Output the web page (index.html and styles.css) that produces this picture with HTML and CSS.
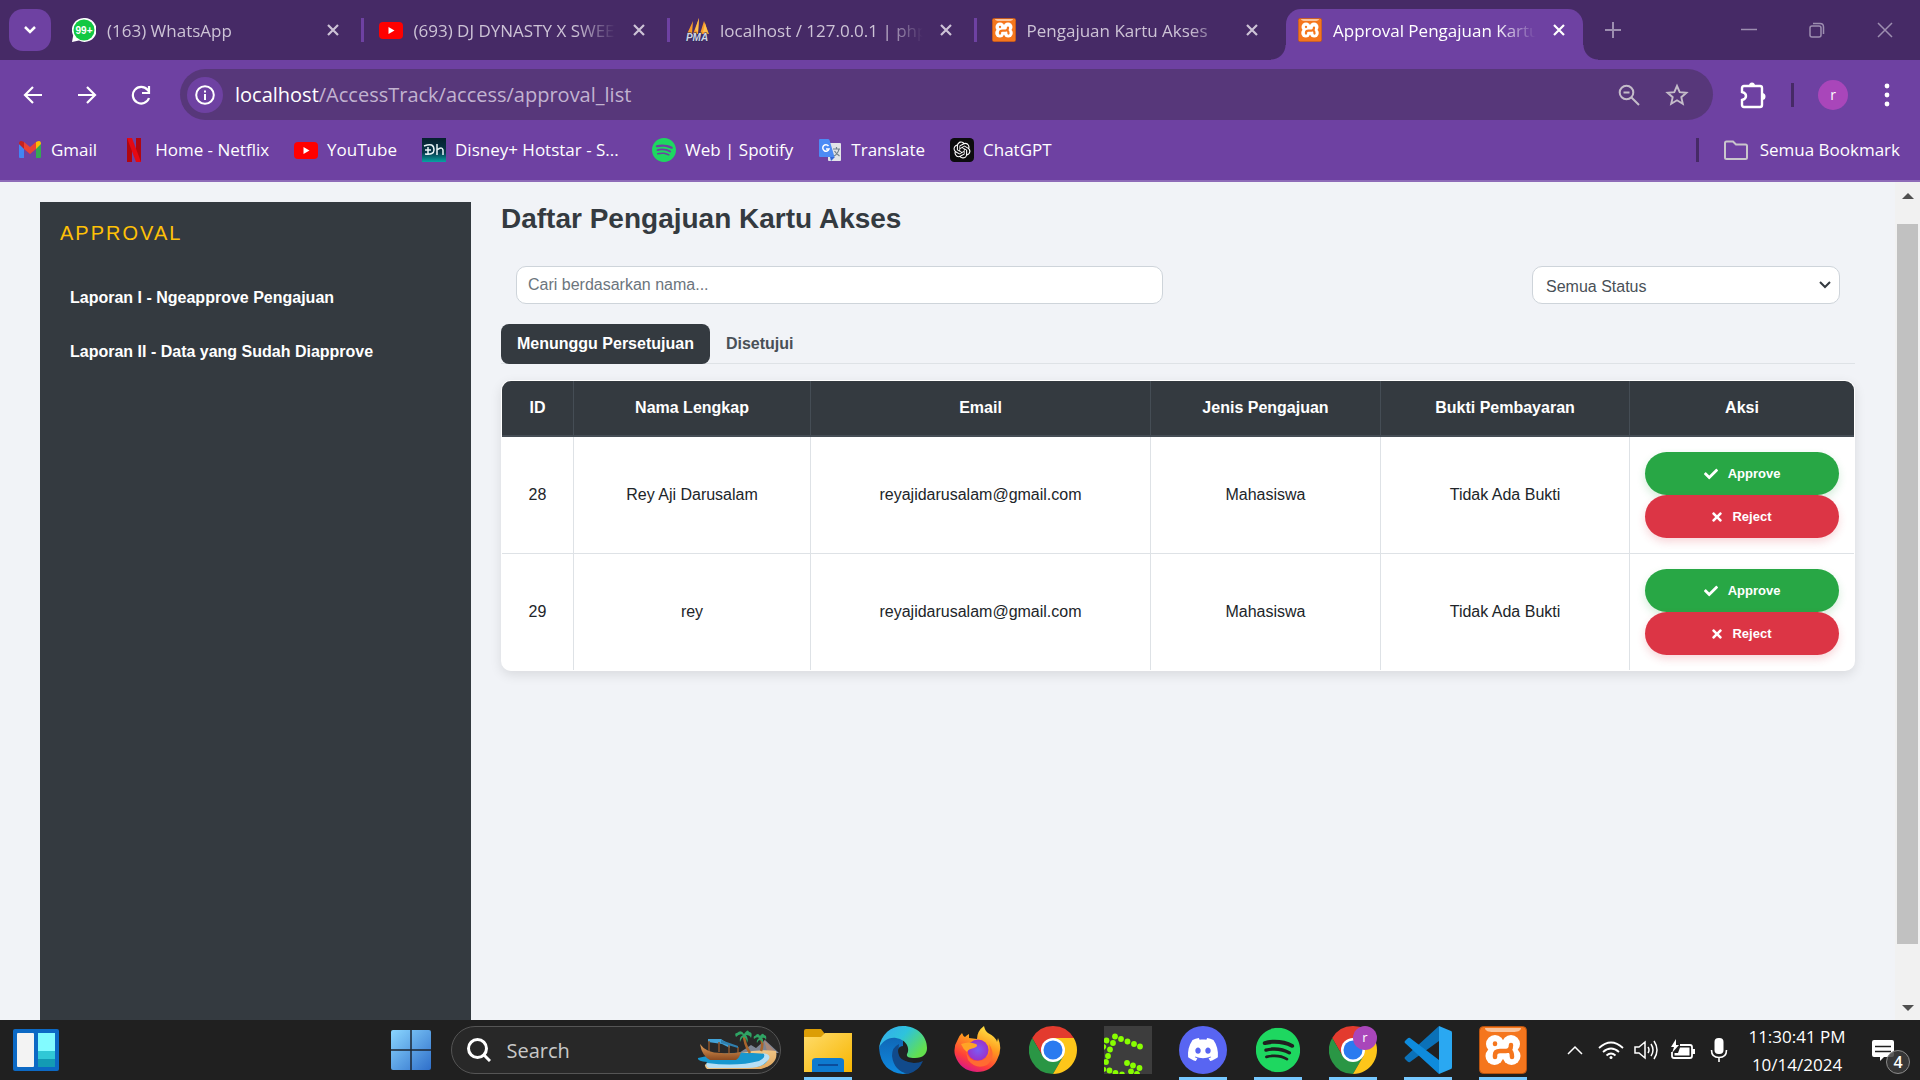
FILE: index.html
```html
<!DOCTYPE html>
<html lang="id">
<head>
<meta charset="utf-8">
<meta name="viewport" content="width=device-width, initial-scale=1">
<title>Approval Pengajuan Kartu Akses</title>
<link rel="stylesheet" href="styles.css">
</head>
<body>
<svg class="sprite" width="0" height="0" aria-hidden="true">
  <defs>
    <linearGradient id="g-edge" x1="0" y1="0" x2="1" y2="0.6"><stop offset="0" stop-color="#35a8f0"/><stop offset=".5" stop-color="#2ec3dc"/><stop offset="1" stop-color="#63e04e"/></linearGradient>
    <linearGradient id="g-edge2" x1="0" y1="0" x2="0" y2="1"><stop offset="0" stop-color="#1066b5"/><stop offset="1" stop-color="#0f8ae0"/></linearGradient>
    <linearGradient id="g-fox" x1="0.8" y1="0" x2="0.3" y2="1"><stop offset="0" stop-color="#fff04a"/><stop offset=".4" stop-color="#ff9a1f"/><stop offset=".75" stop-color="#ff4038"/><stop offset="1" stop-color="#d9148c"/></linearGradient>
    <radialGradient id="g-globe"><stop offset="0" stop-color="#7b5cf5"/><stop offset="1" stop-color="#9a32c9"/></radialGradient>
    <linearGradient id="g-folder" x1="0" y1="0" x2="1" y2="1"><stop offset="0" stop-color="#ffdc6b"/><stop offset="1" stop-color="#f7b500"/></linearGradient>
    <linearGradient id="g-win" x1="0" y1="0" x2="1" y2="1"><stop offset="0" stop-color="#8ad6ff"/><stop offset="1" stop-color="#2f6fca"/></linearGradient>
    <linearGradient id="g-disney" x1="0" y1="0" x2="0" y2="1"><stop offset="0" stop-color="#06202e"/><stop offset=".6" stop-color="#07384a"/><stop offset="1" stop-color="#08a3a3"/></linearGradient>
    <linearGradient id="g-sand" x1="0" y1="0" x2="1" y2="1"><stop offset="0" stop-color="#fbe0a8"/><stop offset="1" stop-color="#e0a55c"/></linearGradient>
    <linearGradient id="g-hull" x1="0" y1="0" x2="0" y2="1"><stop offset="0" stop-color="#e2a05a"/><stop offset="1" stop-color="#8a4a20"/></linearGradient>
  </defs>
  <symbol id="i-close" viewBox="0 0 14 14"><path d="M2 2l10 10M12 2L2 12" fill="none" stroke="currentColor" stroke-width="2.2"/></symbol>
  <symbol id="i-youtube" viewBox="0 0 24 24"><rect y="4" width="24" height="17" rx="4" fill="#f00"/><path d="M9.500 9v7l6-3.500z" fill="#fff"/></symbol>
  <symbol id="i-xampp" viewBox="0 0 48 48">
    <rect x=".5" y=".5" width="47" height="47" rx="4" fill="#f5761d" stroke="#b9530f"/>
    <path d="M6 2h36c0 3-4 4-8 4H14C10 6 6 5 6 2z" fill="#fbc49b"/>
    <g fill="#fff"><circle cx="16" cy="18" r="9"/><circle cx="32" cy="18" r="9"/><circle cx="15.500" cy="30" r="9"/><circle cx="32.500" cy="30" r="9"/><rect x="14" y="17" width="20" height="15"/></g>
    <g fill="none" stroke="#f5761d" stroke-width="4.500" stroke-linecap="round"><path d="M16 17.500v.6M16 31v-2q0-4 5-4h6q5 0 5-6M31 25q2 1 2 6"/></g>
  </symbol>
  <symbol id="i-spotify" viewBox="0 0 24 24"><path fill="#1ed760" d="M12 0C5.400 0 0 5.400 0 12s5.400 12 12 12 12-5.400 12-12S18.660 0 12 0zm5.521 17.340c-.24.359-.66.48-1.021.24-2.820-1.740-6.360-2.101-10.561-1.141-.418.122-.779-.179-.899-.539-.12-.421.18-.78.54-.9 4.560-1.021 8.520-.6 11.640 1.320.42.18.479.659.301 1.020zm1.440-3.300c-.301.42-.841.6-1.262.3-3.239-1.980-8.159-2.580-11.939-1.380-.479.12-1.020-.12-1.140-.6-.12-.48.12-1.021.6-1.141C9.600 9.900 15 10.561 18.720 12.840c.361.181.54.78.241 1.200zm.12-3.360C15.240 8.400 8.820 8.160 5.160 9.301c-.6.179-1.200-.181-1.380-.721-.18-.601.18-1.200.72-1.381 4.260-1.260 11.280-1.020 15.721 1.621.539.3.719 1.020.419 1.560-.299.421-1.020.599-1.559.3z"/></symbol>
  <symbol id="i-chrome" viewBox="0 0 48 48"><path d="M24 12h20.780A24 24 0 0 0 3.210 12l10.400 18z" fill="#e33b2e"/><path d="M13.610 30L3.210 12A24 24 0 0 0 24 48l10.390-18z" fill="#2a9645"/><path d="M34.390 30L24 48A24 24 0 0 0 44.780 12H24z" fill="#fdc61a"/><circle cx="24" cy="24" r="12" fill="#fff"/><circle cx="24" cy="24" r="9.500" fill="#2a7af0"/></symbol>
  <symbol id="i-check" viewBox="0 0 512 512"><path fill="currentColor" d="M173.898 439.404l-166.400-166.400c-9.997-9.997-9.997-26.206 0-36.204l36.203-36.204c9.997-9.998 26.207-9.998 36.204 0L192 312.690 432.095 72.596c9.997-9.997 26.207-9.997 36.204 0l36.203 36.204c9.997 9.997 9.997 26.206 0 36.204l-294.400 294.401c-9.998 9.997-26.207 9.997-36.204-.001z"/></symbol>
  <symbol id="i-times" viewBox="0 0 352 512"><path fill="currentColor" d="M242.720 256l100.070-100.070c12.280-12.280 12.280-32.190 0-44.480l-22.240-22.240c-12.280-12.280-32.190-12.280-44.480 0L176 189.280 75.930 89.210c-12.280-12.280-32.190-12.280-44.480 0L9.210 111.450c-12.280 12.280-12.280 32.190 0 44.480L109.280 256 9.210 356.070c-12.280 12.280-12.280 32.190 0 44.480l22.240 22.240c12.280 12.280 32.200 12.280 44.480 0L176 322.720l100.070 100.070c12.280 12.280 32.200 12.280 44.480 0l22.240-22.240c12.280-12.280 12.280-32.190 0-44.480L242.720 256z"/></symbol>
</svg>

<header class="browser">
  <div class="tabstrip">
    <button class="tab-search" aria-label="Telusuri tab"><svg width="14" height="10" viewBox="0 0 14 10"><path d="M2 2l5 5 5-5" fill="none" stroke="#fff" stroke-width="2.500"/></svg></button>
    <nav class="tabs" aria-label="Tab">
      <div class="tab">
        <svg class="favicon" viewBox="0 0 24 24"><path d="M12 0a12 12 0 1 1-5 22.600L0 24l1.200-6.500A12 12 0 0 1 12 0z" fill="#fff"/><circle cx="12" cy="12" r="10.500" fill="#12c843"/><text x="12" y="16" text-anchor="middle" class="badge-text">99+</text></svg>
        <a class="tab-title" href="#whatsapp">(163) WhatsApp</a>
        <button class="tab-close" aria-label="Tutup"><svg><use href="#i-close"/></svg></button>
      </div>
      <div class="tab">
        <svg class="favicon"><use href="#i-youtube"/></svg>
        <a class="tab-title" href="#youtube">(693) DJ DYNASTY X SWEET</a>
        <button class="tab-close" aria-label="Tutup"><svg><use href="#i-close"/></svg></button>
      </div>
      <div class="tab">
        <svg class="favicon" viewBox="0 0 24 24"><path d="M2 16L8 3l-1 13zM8 16l6-16-1 16zM15 16L19 3l5 13z" fill="#f79a2a"/><path d="M10 12L14 0l-1 14zM18 14l2-9 3 10z" fill="#ffc04d"/><text x="12" y="23" text-anchor="middle" class="pma-text">PMA</text></svg>
        <a class="tab-title" href="#phpmyadmin">localhost / 127.0.0.1 | phpMyAdmin</a>
        <button class="tab-close" aria-label="Tutup"><svg><use href="#i-close"/></svg></button>
      </div>
      <div class="tab tab-last">
        <svg class="favicon"><use href="#i-xampp"/></svg>
        <a class="tab-title" href="#pengajuan">Pengajuan Kartu Akses</a>
        <button class="tab-close" aria-label="Tutup"><svg><use href="#i-close"/></svg></button>
      </div>
      <div class="tab tab-active">
        <svg class="favicon"><use href="#i-xampp"/></svg>
        <a class="tab-title" href="#approval" aria-current="page">Approval Pengajuan Kartu Akses</a>
        <button class="tab-close" aria-label="Tutup"><svg><use href="#i-close"/></svg></button>
      </div>
    </nav>
    <button class="new-tab" aria-label="Tab baru"><svg width="16" height="16" viewBox="0 0 16 16"><path d="M8 0v16M0 8h16" stroke="currentColor" stroke-width="2"/></svg></button>
    <div class="window-controls">
      <button aria-label="Minimalkan"><svg width="16" height="16" viewBox="0 0 16 16"><path d="M0 7.500h16" stroke="currentColor" stroke-width="1.500"/></svg></button>
      <button aria-label="Pulihkan"><svg width="16" height="16" viewBox="0 0 16 16" fill="none" stroke="currentColor" stroke-width="1.500"><rect x="1" y="4" width="11" height="11" rx="2"/><path d="M4 1.500h7q3.500 0 3.500 3.500v7"/></svg></button>
      <button aria-label="Tutup jendela"><svg width="16" height="16" viewBox="0 0 16 16"><path d="M1 1l14 14M15 1L1 15" stroke="currentColor" stroke-width="1.500"/></svg></button>
    </div>
  </div>

  <div class="toolbar">
    <div class="nav-buttons">
      <button class="icon-button" aria-label="Kembali"><svg width="20" height="20" viewBox="0 0 20 20"><path d="M19 10H2M10 2l-8 8 8 8" fill="none" stroke="currentColor" stroke-width="2.200"/></svg></button>
      <button class="icon-button" aria-label="Maju"><svg width="20" height="20" viewBox="0 0 20 20"><path d="M1 10h17M10 2l8 8-8 8" fill="none" stroke="currentColor" stroke-width="2.200"/></svg></button>
      <button class="icon-button" aria-label="Muat ulang"><svg width="20" height="20" viewBox="0 0 20 20"><path d="M18 13a8.300 8.300 0 1 1-1.500-8.200L18 6.500M18 1v7h-7" fill="none" stroke="currentColor" stroke-width="2.200"/></svg></button>
    </div>
    <div class="omnibox">
      <button class="site-info" aria-label="Informasi situs"><svg width="20" height="20" viewBox="0 0 20 20"><circle cx="10" cy="10" r="8.800" fill="none" stroke="#fff" stroke-width="2"/><path d="M10 9v6M10 5.500v2" stroke="#fff" stroke-width="2"/></svg></button>
      <div class="url" role="textbox" aria-label="Alamat" contenteditable="true" spellcheck="false"><b>localhost</b>/AccessTrack/access/approval_list</div>
      <button class="icon-button dim" aria-label="Zoom"><svg width="22" height="22" viewBox="0 0 22 22" fill="none" stroke="currentColor" stroke-width="2"><circle cx="8.500" cy="8.500" r="6.800"/><path d="M13.500 13.500l7.500 7.500M5.500 8.500h6"/></svg></button>
      <button class="icon-button dim" aria-label="Bookmark tab ini"><svg width="24" height="24" viewBox="0 0 24 24"><path d="M12 3l2.700 6.200 6.700.6-5.100 4.400 1.500 6.600-5.800-3.500-5.800 3.500 1.500-6.600-5.100-4.400 6.700-.6z" fill="none" stroke="currentColor" stroke-width="1.900"/></svg></button>
    </div>
    <button class="icon-button puzzle" aria-label="Ekstensi"><svg width="26" height="28" viewBox="0 0 26 28"><path d="M2 7q0-2 2-2h16q2 0 2 2v17q0 2-2 2H4q-2 0-2-2v-5q4-1 4-4t-4-4z" fill="none" stroke="#fff" stroke-width="2.400"/><path d="M9 5a3 3.500 0 0 1 6 0zM22 12a3.500 3.500 0 0 1 0 7z" fill="#fff"/></svg></button>
    <span class="divider"></span>
    <button class="avatar" aria-label="Profil">r</button>
    <button class="icon-button" aria-label="Menu"><svg width="6" height="24" viewBox="0 0 6 24" fill="#fff"><circle cx="3" cy="3" r="2.400"/><circle cx="3" cy="12" r="2.400"/><circle cx="3" cy="21" r="2.400"/></svg></button>
  </div>

  <nav class="bookmarks" aria-label="Bookmark">
    <a href="#gmail"><svg viewBox="0 0 24 24"><path d="M1 20V6l5 4v10H2q-1 0-1-1z" fill="#4285f4"/><path d="M18 10l5-4v13q0 1-1 1h-4z" fill="#34a853"/><path d="M6 4l6 5 6-5v7l-6 5-6-5z" fill="#ea4335"/><path d="M18 4q5-3 5 2l-5 5z" fill="#fbbc04"/><path d="M6 4Q1 1 1 6l5 5z" fill="#c5221f"/></svg>Gmail</a>
    <a href="#netflix"><svg viewBox="0 0 24 24"><path d="M5 0h5v24H5zM14 0h5v24h-5z" fill="#b1060f"/><path d="M5 0h5l9 24h-5z" fill="#e50914"/></svg>Home - Netflix</a>
    <a href="#youtube"><svg><use href="#i-youtube"/></svg>YouTube</a>
    <a class="truncated" href="#hotstar"><svg viewBox="0 0 24 24"><rect width="24" height="24" fill="url(#g-disney)"/><path d="M2 8q10-4 10 4 0 5-9 4M6 9v8M3 12h6M15 6v11M15 12q5-4 6 0v5" fill="none" stroke="#e8f4f6" stroke-width="1.500"/></svg>Disney+ Hotstar - S...</a>
    <a href="#spotify"><svg><use href="#i-spotify"/></svg>Web | Spotify</a>
    <a href="#translate"><svg viewBox="0 0 24 24"><rect x="10" y="5" width="13" height="18" rx="1" fill="#e2e4e8"/><path d="M2 1h8q1 0 1.500 1l5 17H2q-1 0-1-1V2q0-1 1-1z" fill="#4c8bf5"/><path d="M12 19h5l-4 4z" fill="#3367d6"/><path d="M10.500 8a3.200 3.200 0 1 0 .5 3H8" fill="none" stroke="#fff" stroke-width="1.500"/><path d="M15 11h7M18.500 9v2M21 11q-1 5-5 7M16.500 13q2 3 5 5" fill="none" stroke="#70808c" stroke-width="1.200"/></svg>Translate</a>
    <a href="#chatgpt"><svg viewBox="0 0 34 34"><rect width="34" height="34" rx="6" fill="#0c0c0e"/><path transform="translate(5 5)" fill="#fff" d="M22.282 9.821a5.985 5.985 0 0 0-.516-4.911 6.046 6.046 0 0 0-6.510-2.900A6.065 6.065 0 0 0 4.981 4.182a5.985 5.985 0 0 0-3.998 2.900 6.046 6.046 0 0 0 .743 7.097 5.980 5.980 0 0 0 .511 4.911 6.051 6.051 0 0 0 6.515 2.900A5.985 5.985 0 0 0 13.260 24a6.056 6.056 0 0 0 5.772-4.206 5.989 5.989 0 0 0 3.998-2.900 6.056 6.056 0 0 0-.748-7.073zm-9.022 12.608a4.476 4.476 0 0 1-2.876-1.041l.142-.080 4.778-2.758a.795.795 0 0 0 .393-.681v-6.737l2.020 1.169a.071.071 0 0 1 .038.052v5.583a4.504 4.504 0 0 1-4.495 4.494zm-9.661-4.125a4.471 4.471 0 0 1-.535-3.014l.142.085 4.783 2.758a.771.771 0 0 0 .781 0l5.843-3.369v2.332a.080.080 0 0 1-.033.062L9.740 19.950a4.499 4.499 0 0 1-6.141-1.646zM2.341 7.896a4.485 4.485 0 0 1 2.366-1.973V11.600a.766.766 0 0 0 .388.677l5.814 3.354-2.020 1.169a.076.076 0 0 1-.071 0l-4.830-2.787A4.504 4.504 0 0 1 2.341 7.872zm16.596 3.856L13.104 8.364 15.119 7.200a.076.076 0 0 1 .071 0l4.830 2.791a4.494 4.494 0 0 1-.677 8.104v-5.677a.790.790 0 0 0-.407-.667zm2.011-3.023l-.142-.085-4.774-2.782a.776.776 0 0 0-.785 0L9.409 9.230V6.897a.066.066 0 0 1 .028-.062l4.830-2.787a4.499 4.499 0 0 1 6.680 4.660zM8.307 12.863l-2.020-1.164a.080.080 0 0 1-.038-.057V6.074a4.499 4.499 0 0 1 7.376-3.454l-.142.081L8.704 5.459a.795.795 0 0 0-.393.681zm1.098-2.365l2.602-1.500 2.607 1.500v2.999l-2.597 1.500-2.607-1.500Z"/></svg>ChatGPT</a>
    <span class="spacer"></span>
    <span class="divider"></span>
    <a class="all-bookmarks" href="#semua"><svg viewBox="0 0 24 24"><path d="M1 5q0-1.500 1.500-1.500H9l3 3h9.500Q23 6.500 23 8v11.500q0 1.500-1.500 1.500h-19Q1 21 1 19.500z" fill="none" stroke="#c9c6cc" stroke-width="2"/></svg>Semua Bookmark</a>
  </nav>
</header>

<div class="viewport">
  <div class="page">
    <aside class="sidebar">
      <h4 class="sidebar-title">APPROVAL</h4>
      <nav class="sidebar-nav">
        <a href="#laporan-1">Laporan I - Ngeapprove Pengajuan</a>
        <a href="#laporan-2">Laporan II - Data yang Sudah Diapprove</a>
      </nav>
    </aside>
    <main class="content">
      <h2 class="heading">Daftar Pengajuan Kartu Akses</h2>
      <form class="filters">
        <input class="field search-name" type="text" placeholder="Cari berdasarkan nama..." aria-label="Cari berdasarkan nama">
        <div class="status">
          <select class="field" aria-label="Status"><option>Semua Status</option><option>Menunggu</option><option>Disetujui</option></select>
          <svg width="14" height="10" viewBox="0 0 14 10"><path d="M2 2l5 5 5-5" fill="none" stroke="#343a40" stroke-width="2"/></svg>
        </div>
      </form>
      <div class="pills" role="tablist">
        <button class="pill pill-active" role="tab" aria-selected="true">Menunggu Persetujuan</button>
        <button class="pill" role="tab" aria-selected="false">Disetujui</button>
      </div>
      <div class="table-card">
        <table>
          <colgroup><col class="c-id"><col class="c-name"><col class="c-email"><col class="c-type"><col class="c-proof"><col class="c-action"></colgroup>
          <thead><tr><th>ID</th><th>Nama Lengkap</th><th>Email</th><th>Jenis Pengajuan</th><th>Bukti Pembayaran</th><th>Aksi</th></tr></thead>
          <tbody>
            <tr><td>28</td><td>Rey Aji Darusalam</td><td>reyajidarusalam@gmail.com</td><td>Mahasiswa</td><td>Tidak Ada Bukti</td>
              <td class="actions"><button class="action approve"><svg width="14" height="14"><use href="#i-check"/></svg>Approve</button><button class="action reject"><svg width="10" height="14"><use href="#i-times"/></svg>Reject</button></td></tr>
            <tr><td>29</td><td>rey</td><td>reyajidarusalam@gmail.com</td><td>Mahasiswa</td><td>Tidak Ada Bukti</td>
              <td class="actions"><button class="action approve"><svg width="14" height="14"><use href="#i-check"/></svg>Approve</button><button class="action reject"><svg width="10" height="14"><use href="#i-times"/></svg>Reject</button></td></tr>
          </tbody>
        </table>
      </div>
    </main>
  </div>
  <div class="scrollbar" aria-hidden="true">
    <svg width="12" height="8" viewBox="0 0 12 8"><path d="M0 7l6-6 6 6z" fill="#505050"/></svg>
    <div class="thumb"></div>
    <svg class="down" width="12" height="8" viewBox="0 0 12 8"><path d="M0 1l6 6 6-6z" fill="#505050"/></svg>
  </div>
</div>

<footer class="taskbar">
  <button class="widgets" aria-label="Widget"><svg width="46" height="42" viewBox="0 0 46 42"><rect width="46" height="42" rx="2" fill="#0c69c4"/><rect x="4" y="4" width="17" height="34" rx="1" fill="#f3f3f3"/><rect x="25" y="4" width="17" height="18" fill="#82fbff"/><path d="M25 22h17v8H25z" fill="#30c8d6"/><path d="M25 30h17v8H25z" fill="#139bb4"/></svg></button>
  <div class="task-center">
    <button class="start" aria-label="Start"><svg width="40" height="40" viewBox="0 0 40 40"><rect width="40" height="40" rx="2" fill="url(#g-win)"/><path d="M20 0v40M0 20h40" stroke="#1c2530" stroke-width="1.500"/></svg></button>
    <div class="task-search">
      <svg width="24" height="24" viewBox="0 0 24 24" fill="none" stroke="#fff" stroke-width="3"><circle cx="10.500" cy="10.500" r="9"/><path d="M17 17l6 6"/></svg>
      <input type="search" placeholder="Search" aria-label="Search">
      <svg width="82" height="42" viewBox="0 0 82 42">
        <path d="M42 24l12-8 5 3 9-8 14 13z" fill="#7d8594"/><path d="M67 11l12 12-9-1z" fill="#a88878"/>
        <path d="M44 24q18-4 35-2 3 13-15 18H10q-4-4 0-6z" fill="url(#g-sand)"/>
        <path d="M1 29q30-8 68-4 6 9-9 13H12q-4-2-2-5Q0 32 1 29z" fill="#1797cf"/><path d="M10 34q30 4 52-2 8-4 4-8 12 2 2 10-5 5-18 5H12q-4-2-2-5z" fill="#b7dff5"/>
        <path d="M53 24Q47 15 47 5M64 22q3-8-1-15" fill="none" stroke="#a8662c" stroke-width="2.500"/>
        <path d="M47 5q-3-5-7-1-3 0-1 4 4-4 7-2-4 2-3 7 2-5 4-5 3 2 3 6 2-4-1-8 4 0 5 3 2-6-2-6-1-4-5 2zM63 7q-2-4-5 0-2 0-1 3 3-3 5-1-3 2-2 5 1-3 3-3 3 1 2 4 2-4 0-6 3-1 4 2 1-5-2-5-1-3-4 1z" fill="#2fa464"/>
        <path d="M11 10h13l9 6v3l-8-4-14-2z" fill="#42a3d8"/><path d="M12 12v11M22 13v10M32 16v10M41 18v8" stroke="#8c542b" stroke-width="1.500"/><path d="M24 11l17 6v2l-17-5z" fill="#2f7fae"/>
        <path d="M3 15q6 9 21 9 11 1 20-1-1 5-5 8H13Q5 27 3 15z" fill="url(#g-hull)"/>
      </svg>
    </div>
    <div class="apps">
      <button class="open" aria-label="File Explorer"><svg viewBox="0 0 48 48"><path d="M0 5q0-2 2-2h15l4 5v6H0z" fill="#dc9e06"/><path d="M0 11h17l4-4h27v39H0z" fill="url(#g-folder)"/><path d="M8 46V35q0-3 4-3h24q4 0 4 3v11z" fill="#0e7bd0"/><path d="M14 39h20" stroke="#0b4d9b" stroke-width="2"/></svg></button>
      <button aria-label="Edge"><svg viewBox="0 0 48 48"><path d="M0 22C3 10 16 8 24 14L24 30Q26 42 40 41 32 48 24 48 2 46 0 22z" fill="url(#g-edge2)"/><path d="M13 30q0-9 7-12-1 5 0 9 3 9 15 10 5 0 9-2-4 10-15 13Q15 45 13 30z" fill="#114a8b"/><path d="M0 22C2 8 12 0 24 0c14 0 24 10 24 22 0 6-4 10-12 10-6 0-9-1-8-4 3-4 1-14-11-16C9 11 3 16 0 22z" fill="url(#g-edge)"/><path d="M19 25a5 5 0 0 1 9-3q1 4-1 6.500Q28 33 38 35q-18 3-19-10z" fill="#202225"/></svg></button>
      <button aria-label="Firefox"><svg viewBox="0 0 48 48"><path d="M4 13q1-3 4-6 1 3 3 4 2-2 4-3v4l8 1q0-8 7-13 1 5 4 7 8 4 9 9l1-4q5 11-1 22-6 12-20 12Q6 45 1 29-1 21 4 13z" fill="url(#g-fox)"/><circle cx="24" cy="24" r="10.500" fill="url(#g-globe)"/><path d="M7 18q8-3 15 0 3 2-2 4-6 1-7 4-4-3-6-8z" fill="#ffa426"/><path d="M12 26q5 12 17 8 9-4 6-16 8 12-2 21-11 5-19-5z" fill="#ff6b31"/></svg></button>
      <button aria-label="Chrome"><svg><use href="#i-chrome"/></svg></button>
      <button aria-label="Editor"><svg viewBox="0 0 48 48"><rect width="48" height="48" fill="#3d3d3d"/><g fill="#8f0"><circle cx="36" cy="20.500" r="2.900"/><circle cx="30" cy="18" r="2.900"/><circle cx="23.500" cy="15.500" r="2.900"/><circle cx="17" cy="13" r="2.900"/><circle cx="11" cy="10.500" r="2.900"/><circle cx="9" cy="17" r="2.900"/><circle cx="6" cy="23.500" r="2.900"/><circle cx="4" cy="30" r="2.900"/><circle cx="2" cy="36" r="2.900"/><circle cx="2.500" cy="14.500" r="2.900"/><path d="M0 18q3 1 2 4l-2 2zM0 41q3 0 2 4l-2 1z"/><circle cx="5.500" cy="44.500" r="2.900"/><circle cx="11.500" cy="47" r="2.900"/><circle cx="18" cy="48.500" r="2.900"/><circle cx="23" cy="37" r="2.900"/><circle cx="29" cy="39.500" r="2.900"/><circle cx="35.500" cy="42" r="2.900"/><circle cx="27" cy="45.500" r="2.900"/><circle cx="33" cy="48" r="2.900"/></g></svg></button>
      <button class="open" aria-label="Discord"><svg viewBox="0 0 48 48"><circle cx="24" cy="24" r="24" fill="#5865f2"/><path transform="translate(9 8.500) scale(1.250)" fill="#fff" d="M20.317 4.370a19.791 19.791 0 0 0-4.885-1.515.074.074 0 0 0-.079.037c-.211.375-.445.865-.608 1.250-1.845-.276-3.680-.276-5.487 0-.164-.393-.406-.874-.618-1.250a.077.077 0 0 0-.079-.037 19.736 19.736 0 0 0-4.885 1.515.070.070 0 0 0-.032.028C.533 9.046-.319 13.580.099 18.058a.082.082 0 0 0 .031.056c2.053 1.508 4.041 2.423 5.993 3.029a.078.078 0 0 0 .084-.028c.462-.630.873-1.295 1.226-1.994a.076.076 0 0 0-.042-.106c-.653-.248-1.274-.550-1.872-.892a.077.077 0 0 1-.008-.128c.126-.094.252-.192.372-.291a.074.074 0 0 1 .078-.011c3.928 1.793 8.180 1.793 12.061 0a.074.074 0 0 1 .079.010c.120.099.246.198.373.292a.077.077 0 0 1-.007.128 12.299 12.299 0 0 1-1.873.891.077.077 0 0 0-.041.107c.360.698.772 1.363 1.225 1.993a.076.076 0 0 0 .084.029c1.961-.607 3.950-1.522 6.002-3.029a.077.077 0 0 0 .031-.055c.500-5.177-.838-9.674-3.549-13.660a.061.061 0 0 0-.031-.029zM8.020 15.331c-1.183 0-2.157-1.086-2.157-2.419s.956-2.419 2.157-2.419c1.211 0 2.176 1.095 2.157 2.419 0 1.333-.956 2.419-2.157 2.419zm7.975 0c-1.183 0-2.157-1.086-2.157-2.419s.955-2.419 2.157-2.419c1.211 0 2.176 1.095 2.157 2.419 0 1.333-.946 2.419-2.157 2.419z"/></svg></button>
      <button class="open" aria-label="Spotify"><svg viewBox="-1 -1 26 26"><use href="#i-spotify" width="24" height="24"/></svg></button>
      <button class="open" aria-label="Chrome, profil r"><svg viewBox="0 0 48 48"><use href="#i-chrome" width="48" height="48"/><circle cx="36" cy="12" r="12" fill="#a946ba"/><text x="36" y="16" text-anchor="middle" class="profile-text">r</text></svg></button>
      <button class="open" aria-label="Visual Studio Code"><svg viewBox="0 0 48 48"><path d="M1 33q-1-1 0-2L35 0v15L6 36q-1 1-3-1z" fill="#0b71b8"/><path d="M1 15q-1 1 0 2l34 31V34L6 12q-1-1-3 1z" fill="#0e8bdc"/><path d="M35 0l12 5q1 0 1 2v34q0 2-1 2l-12 5z" fill="#2aa8f2"/></svg></button>
      <button class="open" aria-label="XAMPP"><svg><use href="#i-xampp"/></svg></button>
    </div>
  </div>
  <div class="tray">
    <button aria-label="Ikon tersembunyi"><svg width="18" height="12" viewBox="0 0 18 12"><path d="M2 10l7-7 7 7" fill="none" stroke="#fff" stroke-width="1.500"/></svg></button>
    <button aria-label="Wi-Fi"><svg width="26" height="20" viewBox="0 0 26 20" fill="none" stroke="#fff" stroke-width="1.800"><path d="M1 8q12-11 24 0M5 12q8-7 16 0M8.500 15.500q4.500-4 9 0"/><circle cx="13" cy="17.500" r="1.500" fill="#fff" stroke="none"/></svg></button>
    <button aria-label="Volume"><svg width="26" height="20" viewBox="0 0 26 20" fill="none" stroke="#fff" stroke-width="1.500"><path d="M1 7h4l6-5v16l-6-5H1zM14 7q2 3 0 6M17 4q4 6 0 12M20 1q6 9 0 18"/></svg></button>
    <button aria-label="Baterai"><svg width="26" height="22" viewBox="0 0 26 22"><path d="M10 6h10q2 0 2 2v9q0 2-2 2H4q-2 0-2-2v-4" fill="none" stroke="#fff" stroke-width="1.800"/><path d="M10 8.500h9.500v8H4.500V14H8zM22 10h3v5h-3zM6 0l-5 8h3l-2 6 7-8H6z" fill="#fff"/></svg></button>
    <button aria-label="Mikrofon"><svg width="18" height="26" viewBox="0 0 18 26"><rect x="4.500" y="1" width="9" height="16" rx="4" fill="#fff"/><path d="M1.500 13q0 7.500 7.500 7.500t7.500-7.500M9 20.500V25" fill="none" stroke="#fff" stroke-width="1.600"/></svg></button>
    <div class="clock"><time>11:30:41 PM</time><time>10/14/2024</time></div>
    <button class="notify" aria-label="Notifikasi"><svg width="22" height="22" viewBox="0 0 22 22"><path d="M2 1h18q2 0 2 2v13q0 2-2 2h-8l-4 4v-4H2q-2 0-2-2V3q0-2 2-2z" fill="#fff"/><path d="M3 7.500h16M3 12.500h16" stroke="#202020" stroke-width="1.500"/></svg><span class="count">4</span></button>
  </div>
</footer>
</body>
</html>
```
FILE: styles.css
```css
* { box-sizing: border-box; }

body {
  margin: 0;
  min-height: 100vh;
  display: flex;
  flex-direction: column;
  background: #f1f3f7;
  font-family: "Liberation Sans", Arial, sans-serif;
  font-size: 16px;
  color: #212529;
}

button {
  border: 0;
  padding: 0;
  margin: 0;
  background: none;
  color: inherit;
  font: inherit;
}

a { color: inherit; text-decoration: none; }
svg { display: block; flex: none; }
.sprite { position: absolute; }

/* Browser chrome */
.browser {
  background: #6e41a2;
  border-bottom: 2px solid #8e6bb8;
  color: #fff;
  font-family: "Open Sans", "Noto Sans", sans-serif;
  font-size: 17px;
}

.tabstrip {
  display: flex;
  align-items: center;
  height: 60px;
  padding-left: 9px;
  background: #462a66;
}

.tab-search {
  display: grid;
  place-items: center;
  width: 42px;
  height: 42px;
  border-radius: 14px;
  background: #6e41a2;
}

.tabs {
  display: flex;
  flex: 0 1 1530px;
  min-width: 0;
  align-self: stretch;
  margin-left: 9px;
}

.tab {
  position: relative;
  display: flex;
  flex: 1 1 0;
  min-width: 0;
  align-items: center;
  gap: 11px;
  padding: 0 20px 0 14px;
  color: #cdc3d6;
}

.tab:first-child { padding-left: 12px; }

.tab::after {
  content: "";
  position: absolute;
  right: 1px;
  width: 3px;
  height: 24px;
  background: #6e41a2;
}

.tab-last::after { display: none; }

.favicon { width: 24px; height: 24px; }

.tab-title {
  flex: 1;
  overflow: hidden;
  padding-top: 2px;
  white-space: nowrap;
  line-height: 24px;
  -webkit-mask-image: linear-gradient(to left, transparent, #000 40px);
  mask-image: linear-gradient(to left, transparent, #000 40px);
}

.tab-close {
  display: grid;
  place-items: center;
  width: 24px;
  height: 24px;
}

.tab-close svg { width: 14px; height: 14px; }

.tab-active {
  color: #fff;
  align-self: flex-end;
  height: 51px;
  margin: 0 7px 0 2px;
  padding: 0 12px 9px;
  flex: 0 0 297px;
  border-radius: 15px 15px 0 0;
  background: #6e41a2;
}

.tab-active::before,
.tab-active::after {
  content: "";
  position: absolute;
  bottom: 0;
  width: 15px;
  height: 15px;
  background: radial-gradient(circle at 0 0, #462a66 14px, #6e41a2 15px);
}

.tab-active::before { left: -15px; }

.tab-active::after {
  right: -15px;
  background: radial-gradient(circle at 100% 0, #462a66 14px, #6e41a2 15px);
}

.badge-text { fill: #fff; font: bold 10px "Liberation Sans", sans-serif; }
.pma-text { fill: #cfd5e6; stroke: #2b2b58; stroke-width: 1px; paint-order: stroke; font: italic bold 10px "Liberation Sans", sans-serif; }
.profile-text { fill: #fff; font: 13px "Open Sans", sans-serif; }

.new-tab,
.window-controls button {
  display: grid;
  place-items: center;
  width: 46px;
  height: 42px;
  color: #9d8eb0;
}

.window-controls {
  display: flex;
  gap: 22px;
  margin-left: auto;
  padding-right: 12px;
}

.toolbar {
  display: flex;
  align-items: center;
  height: 69px;
  padding: 0 15px;
}

.nav-buttons { display: flex; gap: 18px; }

.icon-button {
  display: grid;
  place-items: center;
  flex: none;
  width: 36px;
  height: 36px;
}

.dim { color: #c4bcc9; }

.omnibox {
  display: flex;
  align-items: center;
  gap: 12px;
  flex: 1;
  min-width: 0;
  height: 51px;
  margin: 0 22px 0 21px;
  padding: 0 18px 0 7px;
  border-radius: 26px;
  background: #57377a;
}

.site-info {
  display: grid;
  place-items: center;
  width: 36px;
  height: 36px;
  border-radius: 50%;
  background: #6e41a2;
}

.url {
  flex: 1;
  min-width: 0;
  overflow: hidden;
  white-space: nowrap;
  font-size: 20px;
  line-height: 30px;
  color: #c2b3d0;
  outline: 0;
}

.url b { font-weight: 400; color: #fff; }

.divider {
  width: 3px;
  height: 24px;
  background: #462a66;
}

.toolbar .divider { margin: 0 24px 0 20px; }

.avatar {
  width: 30px;
  height: 30px;
  margin-right: 21px;
  border-radius: 50%;
  background: #a946ba;
  color: #fff;
  font-size: 14px;
}

.bookmarks {
  display: flex;
  align-items: center;
  gap: 25px;
  height: 51px;
  padding: 0 20px 9px 18px;
  overflow: hidden;
  white-space: nowrap;
}

.bookmarks a {
  display: flex;
  align-items: center;
  gap: 9px;
  line-height: 24px;
}

.bookmarks svg { width: 24px; height: 24px; }
.bookmarks .truncated { min-width: 205px; }
.bookmarks .all-bookmarks { gap: 12px; }
.spacer { flex: 1; }

/* Web page */
.viewport {
  display: flex;
  flex: 1;
}

.page {
  display: grid;
  grid-template-columns: 431fr 1354fr;
  column-gap: 30px;
  flex: 1;
  min-width: 0;
  padding: 20px 40px 0;
}

.sidebar {
  padding: 17px 20px;
  background: #343a40;
}

.sidebar-title {
  margin: 0 0 39px;
  color: #ffc107;
  font-size: 20px;
  font-weight: 400;
  line-height: 28px;
  letter-spacing: 2px;
}

.sidebar-nav {
  display: flex;
  flex-direction: column;
  gap: 30px;
  padding: 0 10px;
  color: #fff;
  font-weight: 700;
  line-height: 24px;
}

.heading {
  margin: 0 0 31px;
  color: #343a40;
  font-size: 28px;
  font-weight: 700;
  line-height: 33px;
}

.filters {
  display: flex;
  justify-content: space-between;
  gap: 30px;
  margin: 0 0 20px;
  padding: 0 15px;
}

.field {
  height: 38px;
  border: 1px solid #ced4da;
  border-radius: 10px;
  background: #fff;
  color: #495057;
  font: 16px "Liberation Sans", Arial, sans-serif;
}

.search-name {
  flex: 0 1 647px;
  padding: 0 11px;
}

.search-name::placeholder { color: #6c757d; opacity: 1; }

.status {
  display: grid;
  align-items: center;
  flex: 0 1 308px;
}

.status select {
  grid-area: 1 / 1;
  width: 100%;
  padding: 2px 13px 0;
  appearance: none;
}

.status svg {
  grid-area: 1 / 1;
  justify-self: end;
  margin-right: 8px;
  pointer-events: none;
}

.pills {
  display: flex;
  margin-bottom: 16px;
  border-bottom: 1px solid #dee2e6;
}

.pill {
  height: 40px;
  margin-bottom: -1px;
  padding: 0 16px;
  border-radius: 8px;
  color: #495057;
  font-weight: 700;
}

.pill-active { background: #343a40; color: #fff; }

.table-card {
  overflow: hidden;
  padding: 1px;
  border-radius: 10px;
  background: #fff;
  box-shadow: 0 4px 12px rgba(0, 0, 0, 0.1);
}

table {
  width: 100%;
  table-layout: fixed;
  border-spacing: 0;
  text-align: center;
}

th,
td {
  padding: 15px;
  border-left: 1px solid #dee2e6;
  line-height: 24px;
}

th {
  padding: 15px 0;
  border-left-color: #454d55;
  border-bottom: 2px solid #454d55;
  background: #343a40;
  color: #fff;
}

thead th:first-child { border-top-left-radius: 9px; }
thead th:last-child { border-top-right-radius: 9px; }
th:first-child,
td:first-child { border-left: 0; }
tbody tr + tr td { border-top: 1px solid #dee2e6; }

.c-id { width: 71px; }
.c-name { width: 237px; }
.c-type { width: 230px; }
.c-proof { width: 249px; }
.c-action { width: 225px; }

.action {
  display: flex;
  align-items: center;
  justify-content: center;
  gap: 10px;
  width: 100%;
  height: 43px;
  border-radius: 22px;
  color: #fff;
  font-size: 13px;
  font-weight: 700;
}

.approve {
  background: #28a745;
  box-shadow: 0 4px 8px rgba(40, 167, 69, 0.2);
}

.reject {
  position: relative;
  background: #dc3545;
  box-shadow: 0 4px 8px rgba(220, 53, 69, 0.2);
}

.scrollbar {
  display: flex;
  flex-direction: column;
  align-items: center;
  width: 25px;
  padding: 10px 0 8px;
  background: #f1f1f1;
}

.thumb {
  flex: 1;
  width: 21px;
  margin: 24px 0 60px;
  background: #c1c1c1;
}

/* Desktop taskbar */
.taskbar {
  display: grid;
  grid-template-columns: 1fr auto 1fr;
  align-items: center;
  height: 60px;
  background: #202020;
  color: #fff;
  font-family: "Open Sans", "Noto Sans", sans-serif;
}

.widgets { margin-left: 13px; justify-self: start; }

.task-center {
  display: flex;
  align-items: center;
  padding-right: 3px;
}

.task-search {
  display: flex;
  align-items: center;
  width: 330px;
  height: 48px;
  margin: 0 23px 0 20px;
  padding: 0 1px 0 15px;
  border: 1px solid #555;
  border-radius: 24px;
  background: #282828;
}

.task-search input {
  flex: 1;
  min-width: 0;
  margin-left: 16px;
  padding: 0;
  border: 0;
  outline: 0;
  background: none;
  color: #fff;
  font: 20px "Open Sans", "Noto Sans", sans-serif;
}

.task-search input::placeholder { color: #c8c8c8; opacity: 1; }

.apps { display: flex; gap: 27px; }

.apps button {
  display: flex;
  align-items: center;
  height: 60px;
  border-top: 3px solid transparent;
  border-bottom: 3px solid transparent;
}

.apps .open { border-bottom-color: #76c8ff; }
.apps svg { width: 48px; height: 48px; }

.tray {
  display: flex;
  align-items: center;
  justify-self: end;
  padding-right: 10px;
}

.tray > button {
  display: grid;
  place-items: center;
  width: 36px;
  height: 48px;
}

.clock {
  display: flex;
  flex-direction: column;
  align-items: center;
  width: 104px;
  margin: 0 15px 0 8px;
  padding-top: 2px;
  font-size: 17px;
  line-height: 28px;
  white-space: nowrap;
}

.tray .notify {
  position: relative;
  width: 46px;
  padding-right: 8px;
}

.count {
  position: absolute;
  right: 0;
  bottom: 0;
  width: 24px;
  height: 24px;
  border: 1px solid #8a8a8a;
  border-radius: 50%;
  background: rgba(60, 60, 60, 0.85);
  font-size: 16px;
  font-weight: 600;
  line-height: 22px;
  text-align: center;
}
```
